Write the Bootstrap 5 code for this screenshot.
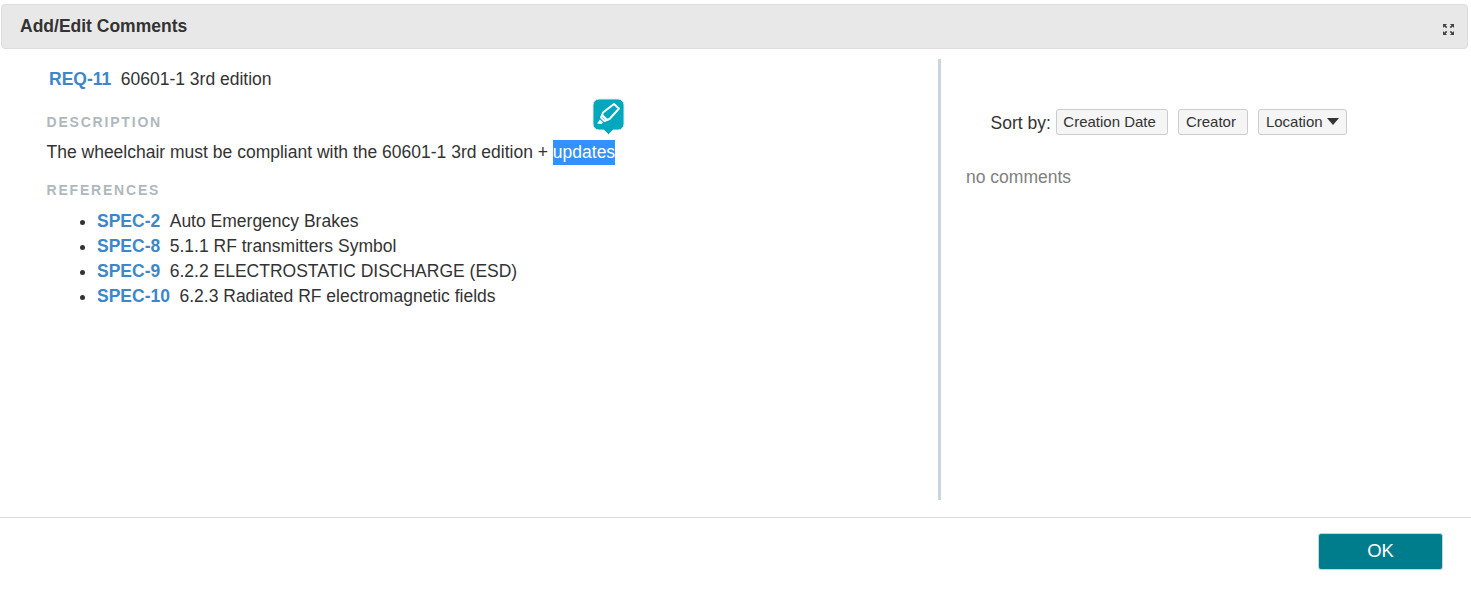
<!DOCTYPE html>
<html lang="en">
<head>
<meta charset="utf-8">
<title>Add/Edit Comments</title>
<link href="https://cdn.jsdelivr.net/npm/bootstrap@5.3.0/dist/css/bootstrap.min.css" rel="stylesheet">
<style>
html,body{height:591px;overflow:hidden;background:#fff}
body{font-family:"Liberation Sans",Arial,sans-serif;font-size:17.5px;line-height:25px;color:#333}
.dlg-head{margin:4px 3px 0 1px;height:45px;background:#e8e8e8;border:1px solid #ddd;border-radius:4px;padding:0 18px;font-size:17.5px;font-weight:700;color:#333}
.dlg-main{height:468px;padding-top:10px}
.pane-left{width:941px;height:441px;border-right:3px solid #cbd5dd;padding:8px 0 0 46.5px;position:relative;flex:none}
.pane-right{padding:50px 0 0 25px}
.item-key{font-weight:700;color:#3d87c9;text-decoration:none;margin-right:9.5px}
.req-line{padding-left:2.5px}
.sec-label{font-size:14px;font-weight:700;letter-spacing:1.8px;color:#b0b8bd;line-height:20px}
.label-desc{margin-top:20px}
.label-refs{margin-top:15px}
.desc-text{margin-top:8px}
.ref-list{margin:9px 0 0;padding-left:50.500px}
.sel-word{display:inline-block;background:#3390ff;color:#fff;line-height:25px}
.marker-tip{position:absolute;left:592px;top:39px;width:33px;height:37px}
.sort-line{padding-left:24.5px;gap:5px;height:26px}
.sort-copy{margin-top:2px}
.sort-btn{font-size:15px;line-height:18px;padding:3px 11.5px 3px 6.5px;height:26px;background:#f5f5f5;border:1px solid #ccc;border-radius:3px;color:#333;margin-right:5px}
.sort-btn:hover{background:#f5f5f5;border-color:#ccc;color:#333}
.sort-btn.menu-btn{padding-right:7px}
.caret-shape{display:inline-block;width:0;height:0;border-left:6.5px solid transparent;border-right:6.5px solid transparent;border-top:7px solid #333;vertical-align:2px;margin-left:4px}
.empty-note{color:#808080;margin-top:30px}
.dlg-foot{border-top:1px solid #ddd;height:74px;padding:15px 28px 0 0}
.ok-btn{width:125px;height:37px;padding:0 0 2px;background:#007d8c;border:1px solid #c8d6d9;border-radius:3px;color:#fff;font-size:18.500px;line-height:32px}
.ok-btn:hover{background:#007d8c;color:#fff}
.grow-icon{width:13px;height:13px;margin-top:6px;margin-right:-6px}
</style>
</head>
<body>
<div class="dlg-head d-flex justify-content-between align-items-center">
  <span>Add/Edit Comments</span>
  <svg class="grow-icon" viewBox="0 0 13 13" fill="#444">
    <path d="M1 1h4L3.6 2.4 5.3 4.1 4.1 5.3 2.4 3.6 1 5zM12 1v4L10.6 3.6 8.9 5.3 7.7 4.1 9.4 2.4 8 1zM1 12V8l1.4 1.4 1.7-1.7 1.2 1.2-1.7 1.7L5 12zM12 12H8l1.4-1.4-1.7-1.7 1.2-1.2 1.7 1.7L12 8z"/>
  </svg>
</div>
<div class="dlg-main d-flex">
  <div class="pane-left">
    <div class="req-line"><a class="item-key" href="#">REQ-11</a>60601-1 3rd edition</div>
    <div class="sec-label label-desc">DESCRIPTION</div>
    <div class="desc-text">The wheelchair must be compliant with the 60601-1 3rd edition + <span class="sel-word">updates</span></div>
    <div class="sec-label label-refs">REFERENCES</div>
    <ul class="ref-list">
      <li><a class="item-key" href="#">SPEC-2</a>Auto Emergency Brakes</li>
      <li><a class="item-key" href="#">SPEC-8</a>5.1.1 RF transmitters Symbol</li>
      <li><a class="item-key" href="#">SPEC-9</a>6.2.2 ELECTROSTATIC DISCHARGE (ESD)</li>
      <li><a class="item-key" href="#">SPEC-10</a>6.2.3 Radiated RF electromagnetic fields</li>
    </ul>
    <svg class="marker-tip" viewBox="0 0 33 37">
      <path d="M7 1h19a6 6 0 0 1 6 6v19a6 6 0 0 1-6 6h-5l-4.500 4.500L12 32H7a6 6 0 0 1-6-6V7a6 6 0 0 1 6-6z" fill="#00a8bd" stroke="#e3e6e8" stroke-width="1"/>
      <g fill="none" stroke="#fff" stroke-width="2" stroke-linejoin="round">
        <path d="M22 6l5 4.500-9.500 10.500-2.500 1-5-5 1-2.500z"/>
        <path d="M10.500 16.500l-1.500 3 3.500 3.500 3-1.500"/>
      </g>
      <path d="M8 21.500l3 3-1.500 1.500-4.500-.5z" fill="#fff"/>
    </svg>
  </div>
  <div class="pane-right flex-grow-1">
    <div class="sort-line d-flex align-items-center">
      <span class="sort-copy">Sort by:</span>
      <button type="button" class="btn sort-btn">Creation Date</button>
      <button type="button" class="btn sort-btn">Creator</button>
      <button type="button" class="btn sort-btn menu-btn">Location<span class="caret-shape"></span></button>
    </div>
    <div class="empty-note">no comments</div>
  </div>
</div>
<div class="dlg-foot d-flex justify-content-end align-items-start">
  <button type="button" class="btn ok-btn">OK</button>
</div>
<script src="https://cdn.jsdelivr.net/npm/bootstrap@5.3.0/dist/js/bootstrap.bundle.min.js"></script>
</body>
</html>
